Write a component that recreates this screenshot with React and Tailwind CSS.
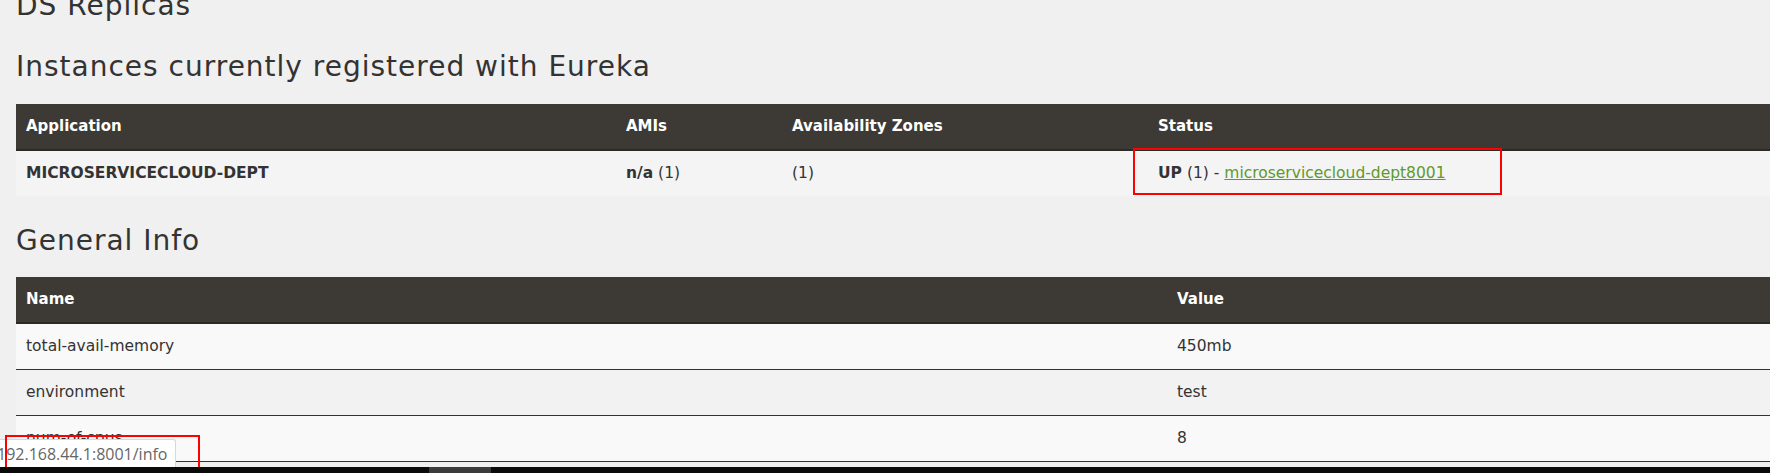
export default function App() {
  const infoRows = [
    { name: 'total-avail-memory', value: '450mb', light: true },
    { name: 'environment', value: 'test', light: false },
    { name: 'num-of-cpus', value: '8', light: true },
  ]

  return (
    <div
      className="relative h-[473px] overflow-hidden bg-[#f0f0f0] text-[#333]"
      style={{ fontFamily: '"DejaVu Sans", "Open Sans", sans-serif' }}
    >
      <h1 className="ml-4 -mt-[11px] text-[28px] leading-[34px] tracking-[1px]">DS Replicas</h1>

      <h1 className="ml-4 mt-[27px] text-[28px] leading-[34px] tracking-[1px]">
        Instances currently registered with Eureka
      </h1>

      {/* instances table */}
      <div className="ml-4 mt-[20px] text-[15.5px]">
        <div className="grid grid-cols-[600px_166px_366px_1fr] h-[47px] items-center bg-[#3d3a35] border-b-2 border-[#2c2a27] text-white font-bold text-[15px]">
          <div className="pl-[10px]">Application</div>
          <div className="pl-[10px]">AMIs</div>
          <div className="pl-[10px]">Availability Zones</div>
          <div className="pl-[10px]">Status</div>
        </div>
        <div className="grid grid-cols-[600px_166px_366px_1fr] h-[45px] items-center bg-[#f4f4f4]">
          <div className="pl-[10px] font-bold">MICROSERVICECLOUD-DEPT</div>
          <div className="pl-[10px]">
            <span className="font-bold">n/a</span> (1)
          </div>
          <div className="pl-[10px]">(1)</div>
          <div className="pl-[10px]">
            <span className="font-bold">UP</span> (1) -{' '}
            <a href="#" className="text-[#5f9a2c] underline">
              microservicecloud-dept8001
            </a>
          </div>
        </div>
      </div>

      <h1 className="ml-4 mt-[28px] text-[28px] leading-[34px] tracking-[1px]">General Info</h1>

      {/* general info table */}
      <div className="ml-4 mt-[19px] text-[15.5px]">
        <div className="grid grid-cols-[1151px_1fr] h-[47px] items-center bg-[#3d3a35] border-b-2 border-[#2c2a27] text-white font-bold text-[15px]">
          <div className="pl-[10px]">Name</div>
          <div className="pl-[10px]">Value</div>
        </div>
        {infoRows.map((r) => (
          <div
            key={r.name}
            className={
              'grid grid-cols-[1151px_1fr] h-[46px] items-center border-b border-[#333] ' +
              (r.light ? 'bg-[#f9f9f9]' : 'bg-[#f2f2f2]')
            }
          >
            <div className="pl-[10px]">{r.name}</div>
            <div className="pl-[10px]">{r.value}</div>
          </div>
        ))}
      </div>

      {/* annotation around status */}
      <div className="absolute left-[1133px] top-[148px] w-[369px] h-[47px] border-2 border-[#ff0000]" />

      {/* browser status bubble */}
      <div
        className="absolute left-0 top-[439px] w-[176px] h-[28px] bg-white border-t border-r border-[#d8d8d8] rounded-tr-[3px] flex items-center text-[16px] text-[#666] overflow-hidden"
        style={{ fontFamily: '"Open Sans", sans-serif' }}
      >
        <span className="-ml-[3px]">192.168.44.1:8001/info</span>
      </div>
      <div className="absolute left-[5px] top-[435px] w-[195px] h-[35px] border-2 border-[#ff0000]" />

      {/* horizontal scrollbar */}
      <div className="absolute left-0 right-0 bottom-0 h-[6px] bg-[#0a0a0a]">
        <div className="ml-[429px] w-[62px] h-full bg-[#3a3a3a]" />
      </div>
    </div>
  )
}
